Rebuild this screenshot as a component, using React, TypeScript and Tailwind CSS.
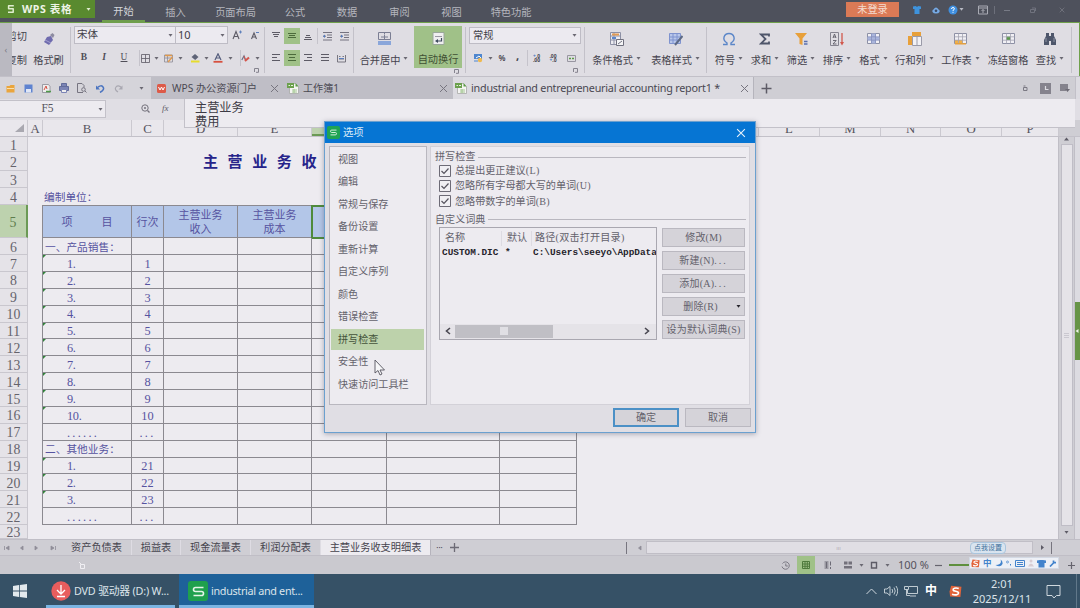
import React from "react";

type Kids = { children?: React.ReactNode };

const UI = "font-['Noto_Sans','Noto_Sans_CJK_SC',sans-serif]";
const SONG = "font-['Liberation_Serif','Noto_Sans_CJK_SC',serif]";

function Cell({ w, c = "", children }: Kids & { w: string; c?: string }) {
  return <div className={`flex h-full shrink-0 items-center justify-center ${w} ${c}`}>{children}</div>;
}

function Svg({ s = 12, h, children }: Kids & { s?: number; h?: number }) {
  return (
    <svg width={s} height={h ?? s} viewBox={`0 0 ${s} ${h ?? s}`} fill="none" className="shrink-0">
      {children}
    </svg>
  );
}

function Caret({ c = "#6a6872" }: { c?: string }) {
  return (
    <Svg s={5} h={3}>
      <path d="M0.5 0h4L2.5 2.8z" fill={c} />
    </Svg>
  );
}

function Lines({ rows, c = "#5d5b66" }: { rows: [number, number, number][]; c?: string }) {
  return (
    <Svg s={10}>
      {rows.map(([x, y, w], i) => (
        <rect key={i} x={x} y={y} width={w} height="1" fill={c} />
      ))}
    </Svg>
  );
}

function Corner() {
  return (
    <Svg s={5}>
      <path d="M.5 4V.5h4v3.8H2" stroke="#85838e" />
    </Svg>
  );
}

function Sep() {
  return <div className="h-[46px] w-px shrink-0 bg-[#c3c1c9]" />;
}

function SheetIcon({ hot }: { hot: number }) {
  return (
    <Svg s={13}>
      <path d="M.5 1.5h12v10H.5z" fill="#f1f0f5" stroke="#8d90a5" />
      {hot === 0 && <path d="M4 1.5h5v10H4zM.5 5h12v3H.5z" fill="#a9b4dc" />}
      {hot === 1 && <path d="M1 8h8v3.5H1z" fill="#f0b04a" />}
      {hot === 2 && <path d="M4 4.5h4.5v3.5H4z" fill="#5c9b4c" />}
      <path d="M4.5 1.5v10M8.5 1.5v10M.5 4.8h12M.5 8.2h12" stroke={hot === 0 ? "#8790bd" : "#a5a5b2"} strokeWidth=".8" />
      {hot === 1 && <path d="M1 11.8h11" stroke="#e8a13a" strokeWidth="1.4" />}
    </Svg>
  );
}

function Big({ w, label, icon, caret = true }: { w: string; label: string; icon: React.ReactNode; caret?: boolean }) {
  return (
    <div className={`flex h-full shrink-0 flex-col items-center pt-2 ${w}`}>
      <div className="flex h-[15px] items-center justify-center">{icon}</div>
      <div className="mt-[7px] flex h-[14px] items-center gap-[3px] text-[10.2px] leading-none text-[#45434d]">
        <span>{label}</span>
        {caret && <span className="pb-[3px]"><Caret /></span>}
      </div>
    </div>
  );
}

function WpsS({ size, c }: { size: number; c: string }) {
  return (
    <svg width={size} height={size} viewBox="0 0 12 12" fill="none">
      <path d="M10 2.8H3.6Q2 2.8 2 4.4T3.6 6h4.8Q10 6 10 7.6T8.4 9.2H2" stroke={c} strokeWidth="1.3" />
    </svg>
  );
}

function Sogou({ size }: { size: number }) {
  return (
    <svg width={size} height={size} viewBox="0 0 12 12" fill="none">
      <path d="M2 .8 11.5 1.5 10.5 11 1 10.5 .5 6z" fill="#e2643a" />
      <path d="M9 3.2C6 2.2 3.500 3 3.800 4.600S9 5.500 8.800 7.400 5.500 9.600 2.800 8.500" stroke="#fff" strokeWidth="1.5" />
    </svg>
  );
}

function DocIcon() {
  return (
    <Svg s={12}>
      <path d="M2.5 1.5h6l3 3v7h-9z" fill="#f4f4f2" stroke="#a7aaa6" strokeWidth=".8" />
      <path d="M8.5 1v3.5h3z" fill="#5a9a45" />
      <rect x="0" y="1" width="7" height="5" fill="#6ba04d" />
      <path d="M1.5 3.5h1.5M4 3.5h2" stroke="#e8f2e0" />
      <path d="M5 8h5M5 10h5M7 7v4" stroke="#9dc48b" strokeWidth=".9" />
    </Svg>
  );
}

function X({ s = 9, c = "#77757f" }: { s?: number; c?: string }) {
  return (
    <svg width={s} height={s} viewBox="0 0 9 9">
      <path d="M1 1l7 7M8 1L1 8" stroke={c} strokeWidth="1" />
    </svg>
  );
}

function TitleBar() {
  const menu: [string, string][] = [
    ["开始", "w-[43px]"], ["插入", "w-[61px]"], ["页面布局", "w-[59px]"], ["公式", "w-[60px]"],
    ["数据", "w-[44px]"], ["审阅", "w-[61px]"], ["视图", "w-[43px]"], ["特色功能", "w-[76px]"],
  ];
  return (
    <div className="flex h-[23px] w-full items-start border-b border-[#6fa04b] bg-[#4e515c] text-[10.2px] leading-none text-[#b5b6be]">
      <div className="flex h-[18px] w-[95px] items-center bg-[#598a2f] pl-[7px]">
        <Svg s={8} h={10}><path d="M6.800 1.800H1.600v3h4.600v3.400H1" stroke="#e0edcf" strokeWidth="1.500" strokeLinejoin="round" /></Svg>
        <span className="ml-[7px] w-[56px] text-[10.6px] font-bold text-[#eef4e6] tracking-[0.600px]">WPS 表格</span>
        <span className="ml-[8px]"><Caret c="#e0edcf" /></span>
      </div>
      <div className="w-[7px]" />
      {menu.map(([t, w], i) => (
        <div key={t} className={`flex h-[22px] shrink-0 items-center justify-center pt-[3px] ${w} ${i === 0 ? "border-b-2 border-[#6f9d4d] text-[#d5d6db]" : ""}`}>
          {t}
        </div>
      ))}
      <div className="flex h-full flex-1 items-start justify-end">
        <div className="mt-[2px] flex h-[15px] w-[53px] items-center justify-center bg-[#db7a56] text-[10.2px] text-[#f4dcd0]">未登录</div>
      </div>
      <div className="flex h-[19px] w-[181px] items-center pl-[13px]">
        <Svg s={10}><path d="M1 1.500 3.500 1Q5 2.400 6.500 1L9 1.500V4H7.500v5h-5V4H1z" fill="#3e93dd" /></Svg>
        <div className="w-[10px]" />
        <Svg s={8}><path d="M1.500 3.500Q4-.5 6.500 3.500Q8 4 7.500 6 6.500 7.500 4 7.500T.5 6Q0 4 1.500 3.500z" fill="#77abe6" /><circle cx="4" cy="4.800" r="1.300" fill="#3c4b66" /></Svg>
        <div className="w-[8px]" />
        <Svg s={10}><circle cx="5" cy="5" r="4.500" fill="#3f8fe0" /><path d="M3.500 4Q3.600 2.500 5 2.500T6.400 3.900Q6.300 4.800 5 5.300v.7M5 6.800v1" stroke="#fff" /></Svg>
        <div className="w-[1px]" />
        <Caret c="#b8bac4" />
        <div className="w-[14px]" />
        <Svg s={10}><path d="M.5 1h9v8h-9zM.5 3h9M5 8V4.500M3.500 6 5 4.500 6.500 6" stroke="#a9abb4" /></Svg>
        <div className="ml-[6px] h-[8px] w-px bg-[#6d707b]" />
        <div className="w-[9px]" />
        <Svg s={6}><path d="M0 3.500h6" stroke="#787b86" /></Svg>
        <div className="w-[20px]" />
        <Svg s={6}><path d="M.5 2.500h4v3h-4zM2 1h3.500v3" stroke="#70737e" /></Svg>
        <div className="w-[23px]" />
        <X s={6} c="#7e818b" />
      </div>
    </div>
  );
}

function FontGroup() {
  const serif = "font-['Liberation_Serif'] text-[9.500px] leading-none text-[#504e58]";
  return (
    <div className="flex w-[190px] shrink-0 flex-col">
      <div className="mt-[3px] flex h-[18px] items-center text-[10.5px] text-[#3f3d47]">
        <div className="flex h-[18px] w-[102px] items-center justify-between border border-[#bebcc5] bg-[#eceaf0] px-[2px]">宋体<Caret /></div>
        <div className="flex h-[18px] w-[52px] items-center justify-between border border-l-0 border-[#bebcc5] bg-[#eceaf0] px-[2px] text-[11px]">10<Caret /></div>
        <Cell w="w-[18px]"><Svg s={10}><path d="M1 9 4 1.500 7 9M2.200 6.500h3.600" stroke="#5d5b66" strokeWidth="1.100" /><path d="M7 2h3M8.500 .5v3" stroke="#4d74b5" strokeWidth=".8" /></Svg></Cell>
        <Cell w="w-[16px]"><Svg s={9}><path d="M1.500 8 4 2 6.500 8M2.500 6h3" stroke="#5d5b66" strokeWidth="1.100" /><path d="M6 1.500h3" stroke="#4d74b5" strokeWidth=".9" /></Svg></Cell>
      </div>
      <div className="mt-[6px] flex h-[16px] items-center">
        <Cell w="w-[20px]"><span className={`${serif} font-bold`}>B</span></Cell>
        <Cell w="w-[20px]"><span className={`${serif} font-bold italic`}>I</span></Cell>
        <Cell w="w-[20px]"><span className={`${serif} underline`}>U</span></Cell>
        <Cell w="w-[6px]" c="border-r border-[#c5c3cb]" />
        <Cell w="w-[10px]"><Svg s={9}><path d="M.5 .5h8v8h-8zM4.500 .5v8M.5 4.500h8" stroke="#5d5b66" strokeWidth=".8" /></Svg></Cell>
        <Cell w="w-[13px]"><Caret /></Cell>
        <Cell w="w-[11px]"><Svg s={9}><path d="M.5 1h8v7h-8zM.5 4h8M3.500 1v7" stroke="#8d8b96" strokeWidth=".8" /><path d="M1 1.500h7M4 8l4.500-5" stroke="#e19a4d" strokeWidth="1.400" /></Svg></Cell>
        <Cell w="w-[13px]"><Caret /></Cell>
        <Cell w="w-[15px]"><Svg s={10}><path d="M1.500 4 5 1l3.500 3-3.300 3z" fill="#5f6478" /><path d="M1 8.500h8.500" stroke="#e6dc2e" strokeWidth="2" /></Svg></Cell>
        <Cell w="w-[9px]"><Caret /></Cell>
        <Cell w="w-[14px]"><Svg s={10}><path d="M2 7 5 .8 8 7M3 5h4" stroke="#555d7c" strokeWidth="1.200" /><path d="M.5 8.800h9" stroke="#d7503f" strokeWidth="1.800" /></Svg></Cell>
        <Cell w="w-[10px]"><Caret /></Cell>
        <Cell w="w-[6px]" c="border-r border-[#c5c3cb]" />
        <Cell w="w-[9px]"><Svg s={9}><path d="M.8 6 3 2l1.500 4" stroke="#6b6f86" strokeWidth="1.200" /><path d="M4 7l4-3.500" stroke="#d4554c" strokeWidth="2" /><path d="M3 2l1.500 4" stroke="#d4554c" /></Svg></Cell>
        <Cell w="w-[14px]"><Caret /></Cell>
      </div>
      <div className="flex justify-end pt-[2px] pr-[5px]"><Corner /></div>
    </div>
  );
}

function AlignGroup() {
  const green = "bg-[#a0c188]";
  return (
    <div className="flex w-[88px] shrink-0 flex-col pl-[3px] pt-[5px]">
      <div className="flex h-[16px] items-center">
        <Cell w="w-[16px]"><Lines rows={[[1, 1, 8], [2, 3, 6], [3, 5, 4]]} /></Cell>
        <Cell w="w-[16px]" c={green}><Lines c="#4c6b3c" rows={[[1, 2, 8], [2, 4, 6], [1, 6, 8]]} /></Cell>
        <Cell w="w-[16px]"><Lines rows={[[3, 4, 4], [2, 6, 6], [1, 8, 8]]} /></Cell>
        <Cell w="w-[2px]" c="border-r border-[#c5c3cb]" />
        <Cell w="w-[18px]"><Svg s={9}><path d="M0 .5h9M4 3h5M4 5.500h5M0 8h9M3 4.200H0" stroke="#696775" strokeWidth=".9" /><path d="M0 4.200 2 2.500v3.500z" fill="#5179bf" /></Svg></Cell>
        <Cell w="w-[16px]"><Svg s={9}><path d="M0 .5h9M4 3h5M4 5.500h5M0 8h9M3 4.200H0" stroke="#696775" strokeWidth=".9" /><path d="M3 4.200 1 2.500v3.500z" fill="#5179bf" /></Svg></Cell>
      </div>
      <div className="mt-[6px] flex h-[16px] items-center">
        <Cell w="w-[16px]"><Lines rows={[[1, 1, 8], [1, 4, 5], [1, 7, 8]]} /></Cell>
        <Cell w="w-[16px]" c={green}><Lines c="#4c6b3c" rows={[[1, 1, 8], [2, 4, 6], [1, 7, 8]]} /></Cell>
        <Cell w="w-[16px]"><Lines rows={[[1, 1, 8], [4, 4, 5], [1, 7, 8]]} /></Cell>
        <Cell w="w-[17px]"><Lines rows={[[1, 1, 8], [1, 4, 8], [1, 7, 8]]} /></Cell>
        <Cell w="w-[16px]"><Svg s={9}><path d="M.5 1v7h8V1M2 2.500h1.500M5.500 2.500H7M2 5h5" stroke="#6d6b76" strokeWidth=".9" /><path d="M2 4.500h5" stroke="#5179bf" strokeWidth=".9" /></Svg></Cell>
      </div>
    </div>
  );
}

function NumberGroup() {
  return (
    <div className="flex w-[118px] shrink-0 flex-col pl-[3px]">
      <div className="mt-[4px] flex h-[17px] w-[112px] items-center justify-between border border-[#bebcc5] bg-[#eceaf0] px-[3px] text-[10.2px] text-[#3f3d47]">常规<Caret /></div>
      <div className="mt-[6px] flex h-[16px] items-center text-[8px] text-[#44424c]">
        <Cell w="w-[17px]"><Svg s={10}><rect x="1" y="1" width="8" height="5" fill="#4e86cf" /><path d="M3 5l3-2 2 2" stroke="#fff" /><path d="M1 8h4" stroke="#4e86cf" /><circle cx="7" cy="7" r="2.200" fill="#efb94f" /></Svg></Cell>
        <Cell w="w-[8px]"><Caret /></Cell>
        <Cell w="w-[16px]" c="font-semibold">%</Cell>
        <Cell w="w-[15px]" c="pb-[3px] text-[11px] font-bold">,</Cell>
        <Cell w="w-[3px]" c="border-r border-[#c5c3cb]" />
        <Cell w="w-[17px]"><div className="text-[5px] font-bold leading-[4px]"><div><span className="text-[#4a76bd]">+</span>.0</div><div>.00</div></div></Cell>
        <Cell w="w-[16px]"><div className="text-[5px] font-bold leading-[4px]"><div>.00</div><div><span className="text-[#4a76bd]">+</span>.0</div></div></Cell>
        <Cell w="w-[21px]"><Svg s={9}><path d="M.5 1.500h8v6h-8z" stroke="#9896a1" /><path d="M2 4.500h2M5 4.500h2" stroke="#5a9a45" strokeWidth="1.500" /></Svg></Cell>
      </div>
      <div className="flex justify-end pt-[2px] pr-[6px]"><Corner /></div>
    </div>
  );
}

function Ribbon() {
  return (
    <div className="flex h-[53px] w-full items-center border-r border-[#6fa04b] bg-[#dfdde3]">
      <div className="flex h-full w-[12px] shrink-0 items-center justify-center bg-[#bab9c1] text-[9px] text-[#7c7a85]">‹</div>
      <div className="flex h-full w-[15px] shrink-0 flex-col items-end overflow-hidden pt-[8px] text-[10.2px] leading-none text-[#45434d]">
        <div className="h-[10px]">剪切</div>
        <div className="mt-[14px] h-[10px]">复制</div>
      </div>
      <Big w="w-[43px]" caret={false} label="格式刷" icon={<Svg s={14}><path d="M8 3l2.500-2 2 2L11 6z" fill="#8d8ba0" /><path d="M5 5l4-1 2 4-4 5-5-3z" fill="#6f6bae" /><path d="M3 8l6 3" stroke="#a3a0d0" /></Svg>} />
      <Sep />
      <div className="w-[3px] shrink-0" />
      <div className="h-full"><FontGroup /></div>
      <Sep />
      <div className="h-full"><AlignGroup /></div>
      <Sep />
      <Big w="w-[60px]" label="合并居中" icon={<Svg s={13}><path d="M.5 .5h12v7H.5zM6.500 .5v2M3 5h7M6.500 3v4" stroke="#7b7e93" /><rect y="9" width="13" height="4" fill="#8aa6da" /></Svg>} />
      <div className="flex h-full shrink-0 flex-col">
        <div className="mt-[3px] flex h-[42px] w-[48px] flex-col items-center bg-[#a0c188] pt-[6px]">
          <Svg s={13}><path d="M1 .5h11v12H1z" fill="#efeff0" stroke="#9aa79a" /><path d="M3 4.500h7" stroke="#9a98a3" /><path d="M9.500 6v3H5" stroke="#3e4a5e" strokeWidth="1.200" /><path d="M3 9l3-2v4z" fill="#3e4a5e" /></Svg>
          <span className="mt-[9px] text-[10.2px] leading-none text-[#3f5034]">自动换行</span>
        </div>
        <div className="flex justify-end pt-px pr-[3px]"><Corner /></div>
      </div>
      <div className="w-[3px] shrink-0" />
      <Sep />
      <div className="h-full"><NumberGroup /></div>
      <Sep />
      <Big w="w-[63px]" label="条件格式" icon={<Svg s={14}><path d="M.5 .5h10v12H.5zM.5 4h10M.5 8h10M4 .5v12" stroke="#8d90a5" fill="#ecebf0" /><path d="M2 2.500h7" stroke="#e39a52" strokeWidth="2" /><path d="M2 6h4" stroke="#5a86cc" strokeWidth="2" /><path d="M6.500 7.500h7v6h-7zM8 12l4-3" stroke="#70707e" fill="#f4f4f6" /></Svg>} />
      <Big w="w-[55px]" label="表格样式" icon={<Svg s={14}><path d="M.5 1.500h11v10H.5z" fill="#b9c7ea" stroke="#7f93cf" /><path d="M4 1v10M8 1v10M.5 5h11M.5 8h11" stroke="#7f93cf" /><path d="M6 13l7.500-9" stroke="#5d6a85" strokeWidth="2" /></Svg>} />
      <div className="w-[3px] shrink-0" />
      <Sep />
      <div className="w-[4px] shrink-0" />
      <Big w="w-[36px]" label="符号" icon={<Svg s={14}><path d="M1 12.500h4v-1.500C-.5 7.500 2 1.500 7 1.500s7.500 6 2 9.500v1.500h4" stroke="#5b86c8" strokeWidth="1.400" /></Svg>} />
      <Big w="w-[36px]" label="求和" icon={<Svg s={12}><path d="M10 3.500V1.500H2L6.500 6 2 10.500h8v-2" stroke="#4f566b" strokeWidth="1.800" /></Svg>} />
      <Big w="w-[36px]" label="筛选" icon={<Svg s={14}><path d="M1 1h12L8.500 6.500V13l-3-1V6.500z" fill="#e8a03a" /><path d="M10 9.500h3.500M10 12h3.500" stroke="#5a6fae" strokeWidth="1.300" /></Svg>} />
      <Big w="w-[36px]" label="排序" icon={<Svg s={14}><path d="M.5 .5h8v13h-8z" stroke="#868490" /><path d="M3 6l1.500-4L6 6M3.300 5h2.500M3 8.500h3.200L3 12h3.500" stroke="#5d5b66" strokeWidth=".9" /><path d="M12 1v10" stroke="#d1584d" strokeWidth="1.300" /><path d="M10 10h4l-2 3.500z" fill="#d1584d" /></Svg>} />
      <Big w="w-[37px]" label="格式" icon={<SheetIcon hot={0} />} />
      <Big w="w-[45px]" label="行和列" icon={<Svg s={14}><path d="M4.500 4.500h9v9h-9z" fill="#f2f1f5" stroke="#9a9aa8" /><path d="M9 5v8" stroke="#9a9aa8" /><rect x="4" y="0" width="9" height="4" fill="#e8a03a" /><rect x="0" y="4" width="4" height="9" fill="#e8a03a" /></Svg>} />
      <Big w="w-[47px]" label="工作表" icon={<SheetIcon hot={1} />} />
      <Big w="w-[48px]" label="冻结窗格" caret={false} icon={<SheetIcon hot={2} />} />
      <Big w="w-[36px]" label="查找" icon={<Svg s={14}><path d="M3 1h3v3h2V1h3v3l2 4v5H8V9H6v4H1V8l2-4z" fill="#4e566b" /><path d="M3 6v4M11 6v4" stroke="#8d93a5" /></Svg>} />
      <div className="w-[3px] shrink-0" />
      <Sep />
    </div>
  );
}

function TabBar() {
  return (
    <div className="flex h-[23px] w-full border-t border-[#c2c0c8] bg-[#cfced4] text-[11px] leading-none text-[#4a4852]">
      <div className="flex w-[151px] shrink-0 items-center bg-[#d5d4da]">
        <Cell w="w-[20px]"><Svg s={9}><path d="M.5 2h3l1-1h4v7.500h-8z" fill="#eaa53c" /><path d="M1 4.500h7" stroke="#fae0ac" /></Svg></Cell>
        <Cell w="w-[17px]"><Svg s={9}><rect x=".5" y=".5" width="8" height="8" fill="#5f83d0" /><rect x="2" y="5" width="5" height="3.500" fill="#dfe6f6" /></Svg></Cell>
        <Cell w="w-[18px]"><Svg s={9}><path d="M.5 .5h6l1.500 2v6H.5z" fill="#eee" stroke="#8a8a93" strokeWidth=".8" /><path d="M2 6l2-4 1 3" stroke="#d65245" /><path d="M4 7.500h5" stroke="#4f9a4a" strokeWidth="1.500" /></Svg></Cell>
        <Cell w="w-[18px]"><Svg s={10}><path d="M2.500 3V.5h5V3M.5 3.500h9v4h-9z" fill="#7b84b5" stroke="#626c9b" /><path d="M2.500 6.500h5v3h-5z" fill="#eee" stroke="#7b84b5" /></Svg></Cell>
        <Cell w="w-[18px]"><Svg s={10}><path d="M6 9.500H.5v-9H5l2 2v2" stroke="#767480" /><circle cx="6.500" cy="6.500" r="1.800" stroke="#767480" /><path d="M8 8l1.500 1.500" stroke="#767480" /></Svg></Cell>
        <Cell w="w-[19px]"><Svg s={9}><path d="M1.500 3.500Q5 .5 7 3T4 8.500" stroke="#4b74c0" strokeWidth="1.500" /><path d="M0 1.500v4h4z" fill="#4b74c0" /></Svg></Cell>
        <Cell w="w-[17px]"><Svg s={9}><path d="M7.500 3.500Q4 .5 2 3T4 8" stroke="#a9a8b1" strokeWidth="1.200" /><path d="M8.500 1.500v4h-4z" fill="#a9a8b1" /></Svg></Cell>
        <Cell w="w-[24px]" c="pl-[4px]"><Caret /></Cell>
      </div>
      <div className="flex w-[134px] shrink-0 items-center bg-[#bfbec6]">
        <Cell w="w-[20px]"><Svg s={9}><rect width="9" height="9" rx="1.500" fill="#dd5a48" /><path d="M1.500 3l1.500 3 1.500-3L6 6l1.500-3" stroke="#fff" /></Svg></Cell>
        <span className="ml-px w-[92px] pt-px text-[10.200px]">WPS 办公资源门户</span>
        <Cell w="w-[21px]"><X /></Cell>
      </div>
      <div className="flex w-[168px] shrink-0 items-center bg-[#bfbec6]">
        <Cell w="w-[15px]"><DocIcon /></Cell>
        <span className="ml-[3px] flex-1 pt-px text-[10.100px]">工作簿1</span>
        <Cell w="w-[20px]"><X /></Cell>
      </div>
      <div className="flex w-[301px] shrink-0 items-center border-r border-[#b5b4bc] bg-[#dcdbe1]">
        <Cell w="w-[16px]"><DocIcon /></Cell>
        <span className="ml-[2px] flex-1 pt-px text-[10.800px] tracking-[-0.240px]">industrial and entrepreneurial accounting report1 *</span>
        <Cell w="w-[17px]"><X /></Cell>
      </div>
      <Cell w="w-[24px]"><Svg s={11}><path d="M5.500 .5v10M.5 5.500h10" stroke="#5d5b66" strokeWidth="1.500" /></Svg></Cell>
      <div className="flex-1" />
      <Cell w="w-[20px]"><Svg s={7}><path d="M1.500 2.500h3.500v3h-3.500zM1.500 1h2" stroke="#7b7983" /></Svg></Cell>
      <Cell w="w-[20px]"><Svg s={11}><rect width="11" height="11" fill="#85838d" /><path d="M5.500 3v3.500h3" stroke="#dcdbe1" strokeWidth="1.200" /></Svg></Cell>
      <Cell w="w-[20px]"><Svg s={10}><path d="M0 1h8v5H6v2H0z" fill="#85838d" /><path d="M5 6h5L7.500 9z" fill="#6d6b75" /></Svg></Cell>
      <div className="w-[5px] shrink-0 border-l border-[#c2c0c8] bg-[#dcdbe1]" />
    </div>
  );
}

function FormulaAndHeader() {
  const cols: [string, string][] = [
    ["A", "w-[15px]"], ["B", "w-[89px]"], ["C", "w-[32px]"], ["D", "w-[74px]"], ["E", "w-[74px]"], ["", "w-[75px]"],
    ["", "w-[113px]"], ["", "w-[77px]"], ["", "w-[61px]"], ["", "w-[61px]"], ["", "w-[60px]"], ["L", "w-[61px]"],
    ["M", "w-[61px]"], ["N", "w-[60px]"], ["O", "w-[61px]"], ["P", "w-[57px]"],
  ];
  return (
    <div className="relative flex h-[38px] w-full flex-col bg-[#e0dee4]">
      <div className={`flex h-[21px] items-start ${SONG}`}>
        <div className="mt-px flex h-[18px] w-[106px] items-center border border-l-0 border-[#c3c1c9] bg-[#edebf0] text-[11.500px] text-[#55535d]">
          <span className="w-[95px] text-center">F5</span>
          <span className="ml-[3px]"><Caret /></span>
        </div>
        <div className="mt-px flex h-[17px] items-center">
          <Cell w="w-[78px]"><Svg s={9}><circle cx="4" cy="4" r="3.200" stroke="#75737d" /><path d="M3 4h2M6.500 6.500 8.500 8.500" stroke="#75737d" strokeWidth="1.300" /></Svg></Cell>
          <span className="-ml-[22px] text-[9px] italic text-[#5d5b66]">fx</span>
        </div>
      </div>
      <div className={`flex h-[17px] items-center overflow-hidden border-b border-[#c3c1c9] bg-[#e9e7ec] text-[12.800px] leading-none text-[#55535d] ${SONG}`}>
        <div className="flex h-full w-[28px] shrink-0 items-center justify-end border-r border-[#cbc9d0] pr-[3px]"><Svg s={9}><path d="M9 0v8H0z" fill="#a9a8b0" /></Svg></div>
        {cols.map(([l, w], i) => (
          <div key={i} className={`flex h-full shrink-0 items-center justify-center border-r border-[#cbc9d0] pt-[3px] ${w} ${i === 5 ? "border-b-2 border-b-[#6b9a55] bg-[#bdd2ae]" : ""}`}>{l}</div>
        ))}
        <div className="h-full flex-1 bg-[#cfced4]" />
      </div>
      <div className={`absolute left-[184px] top-0 h-[29px] w-[891px] overflow-hidden border-b border-l border-[#c3c1c9] bg-[#edebf0] pl-[10px] pt-[3px] text-[12.200px] leading-[13.500px] text-[#3d3b45] ${SONG}`}>
        <div>主营业务</div>
        <div>费用</div>
      </div>
    </div>
  );
}

type RowDef = { n: number; b: string; c: string; kind: "head" | "num" | "dots" };
const ROWS: RowDef[] = [
  { n: 6, b: "一、产品销售：", c: "", kind: "head" },
  ...Array.from({ length: 10 }, (_, i): RowDef => ({ n: 7 + i, b: `${i + 1}.`, c: `${i + 1}`, kind: "num" })),
  { n: 17, b: "......", c: "...", kind: "dots" },
  { n: 18, b: "二、其他业务：", c: "", kind: "head" },
  { n: 19, b: "1.", c: "21", kind: "num" },
  { n: 20, b: "2.", c: "22", kind: "num" },
  { n: 21, b: "3.", c: "23", kind: "num" },
  { n: 22, b: "......", c: "...", kind: "dots" },
];

function RowNo({ n, on }: { n: number; on?: boolean }) {
  return (
    <div className={`flex h-full w-[28px] shrink-0 items-center justify-center border-b border-r border-b-[#c9c7ce] pt-[3px] text-[13.800px] leading-none ${on ? "border-r-2 border-r-[#6b9a55] bg-[#bdd2ae] text-[#5d7d4d]" : "border-r-[#cbc9d0] bg-[#e5e3e8] text-[#65636c]"}`}>
      {n}
    </div>
  );
}

const LINE = "border-[#8b8990]";

function Grid() {
  const head = `flex h-full shrink-0 items-center justify-center border-r border-b pt-px text-center leading-[14.500px] ${LINE}`;
  return (
    <div className={`flex h-[402px] w-full bg-[#edebf0] ${SONG}`}>
      <div className="flex h-full w-[1058px] flex-col overflow-hidden text-[#5653a0]">
        <div className="flex h-[15.400px] shrink-0"><RowNo n={1} /></div>
        <div className="flex h-[19px] shrink-0"><RowNo n={2} /><div className="mt-[1px] flex items-center pl-[175px] text-[15px] font-bold leading-none tracking-[9.600px] text-[#26248a]">主营业务收</div></div>
        <div className="flex h-[16.800px] shrink-0"><RowNo n={3} /></div>
        <div className="flex h-[17px] shrink-0"><RowNo n={4} /><div className="flex items-center pl-[16px] pt-[2px] text-[10.700px] leading-none">编制单位：</div></div>
        <div className="flex h-[33px] shrink-0 text-[11px]">
          <RowNo n={5} on />
          <div className="w-[14px]" />
          <div className={`flex border-l border-t bg-[#b3c6e8] ${LINE}`}>
            <div className={`${head} w-[89px] gap-[29px]`}><span>项</span><span>目</span></div>
            <div className={`${head} w-[32px]`}>行次</div>
            <div className={`${head} w-[74px]`}>主营业务<br />收入</div>
            <div className={`${head} w-[74px]`}>主营业务<br />成本</div>
            <div className={`${head} w-[75px] outline-2 -outline-offset-1 outline-[#4f8a3c]`} />
            <div className={`${head} w-[113px]`} />
            <div className={`${head} w-[77px]`} />
          </div>
        </div>
        {ROWS.map((r) => {
          const cell = `h-full shrink-0 border-r border-b ${LINE}`;
          return (
            <div key={r.n} className="flex h-[16.880px] shrink-0 text-[12.300px] leading-none">
              <RowNo n={r.n} />
              <div className="w-[14px] shrink-0" />
              <div className={`flex h-full w-[90px] shrink-0 items-center border-b border-l border-r ${LINE} ${r.kind === "head" ? "pl-[2px] pt-[2px] text-[10.700px]" : ""}`}>
                {r.kind !== "head" && <div className="h-full w-[24px]">{r.kind === "num" && <Svg s={3}><path d="M0 0h3L0 3z" fill="#2f8038" /></Svg>}</div>}
                <span className={r.kind === "dots" ? "pt-[3px] tracking-[2.300px]" : r.kind === "num" ? "pt-[2px] tracking-[-0.300px]" : ""}>{r.b}</span>
              </div>
              <div className={`${cell} flex w-[32px] items-center justify-center pt-[2px] ${r.kind === "dots" ? "tracking-[2.300px]" : ""}`}>{r.c}</div>
              <div className={`${cell} w-[74px]`} />
              <div className={`${cell} w-[74px]`} />
              <div className={`${cell} w-[75px]`} />
              <div className={`${cell} w-[113px]`} />
              <div className={`${cell} w-[77px]`} />
            </div>
          );
        })}
        <div className="flex h-[13.800px] shrink-0"><RowNo n={23} /></div>
      </div>
      <div className="flex h-full w-[17px] flex-col items-center border-l border-r border-[#c0bec6] bg-[#cfced4]">
        <Svg s={5} h={4}><path d="M0 3.500h5L2.500 .5z" fill="#5d5b66" /></Svg>
        <div className="mt-[3px] flex w-[12px] flex-1 items-center justify-center border border-[#bfbdc6] bg-[#e5e3e8]"><Svg s={5}><path d="M0 .5h5M0 2.500h5M0 4.500h5" stroke="#c3c1c9" strokeWidth=".8" /></Svg></div>
        <div className="flex h-[13px] items-center"><Caret c="#5d5b66" /></div>
      </div>
      <div className="flex w-[5px] flex-col bg-[#dcdbe1] pt-[165px]">
        <div className="flex h-[58px] items-center bg-[#679447]"><Svg s={4}><path d="M3.500 0v4L.5 2z" fill="#eef4e6" /></Svg></div>
      </div>
    </div>
  );
}

function NavArrow({ d }: { d: string }) {
  return <Svg s={6}><path d={d} stroke="#8f8d98" fill="#8f8d98" strokeWidth=".8" /></Svg>;
}

function SheetTabs() {
  const tabs: [string, string][] = [["资产负债表", "w-[70px]"], ["损益表", "w-[49px]"], ["现金流量表", "w-[70px]"], ["利润分配表", "w-[70px]"]];
  return (
    <div className="flex h-[17px] w-full items-center border-b border-t border-[#c0bec6] bg-[#cfced4] text-[10.200px] leading-none text-[#45434d]">
      <Cell w="w-[14px]"><NavArrow d="M.5 1v4M5 1v4L2 3z" /></Cell>
      <Cell w="w-[15px]"><NavArrow d="M4 1v4L1.500 3z" /></Cell>
      <Cell w="w-[14px]"><NavArrow d="M2 1v4L4.500 3z" /></Cell>
      <Cell w="w-[19px]"><NavArrow d="M5.500 1v4M1 1v4L4 3z" /></Cell>
      {tabs.map(([t, w]) => <Cell key={t} w={w} c="border-r border-[#dedce3]">{t}</Cell>)}
      <Cell w="w-[110px]" c="border-r border-[#b5b3bc] bg-[#edebf0]">主营业务收支明细表</Cell>
      <Cell w="w-[17px]" c="text-[8px]">···</Cell>
      <Cell w="w-[12px]"><Svg s={9}><path d="M4.500 0v9M0 4.500h9" stroke="#6d6b76" strokeWidth="1.300" /></Svg></Cell>
      <div className="flex-1" />
      <div className="h-[12px] w-px bg-[#77757f]" />
      <Cell w="w-[19px]" c="pl-[6px]"><NavArrow d="M4 1v4L1.500 3z" /></Cell>
      <div className="flex h-[13px] w-[387px] items-center justify-end border border-[#c0bec6] bg-[#e0dee4]">
        <div className="flex-1 pl-[60px] text-center text-[6px] text-[#b0aeb7]">ııı</div>
        <div className="mr-[26px] flex h-[12px] w-[36px] items-center justify-center rounded-sm border border-[#a9c5dd] bg-[#d9e4ef] text-[7px] text-[#40709a]">点我设置</div>
      </div>
      <Cell w="w-[18px]"><Svg s={5}><path d="M1 0v5l3-2.500z" fill="#5d5b66" /></Svg></Cell>
      <div className="h-[12px] w-px bg-[#77757f]" />
      <div className="w-[28px]" />
    </div>
  );
}

function StatusBar() {
  return (
    <div className="flex h-[18px] w-full items-center bg-[#cac9cf] text-[11px] leading-none text-[#55535d]">
      <Cell w="w-[164px]"><Svg s={7}><path d="M1.500 2.500h4v4h-4zM0 0l3 3" stroke="#f0eff3" /></Svg></Cell>
      <div className="flex-1" />
      <Cell w="w-[24px]"><Svg s={9}><path d="M1.500 2.500A3.700 3.700 0 1 1 1 5.500M4.800 2.500V5h2" stroke="#7b7983" /></Svg></Cell>
      <Cell w="w-[18px]" c="bg-[#a0c188]"><Svg s={8}><path d="M.5 .5h7v7h-7zM3 .5v7M5.300 .5v7M.5 3h7M.5 5.300h7" stroke="#4f7a3c" /></Svg></Cell>
      <Cell w="w-[25px]"><Svg s={8}><path d="M.5 1h4M.5 3h4M.5 5h4M.5 7h4M6.500 .5v4M6.500 6v2M2.500 1v6" stroke="#6d6b76" /></Svg></Cell>
      <Cell w="w-[16px]"><Svg s={8}><path d="M0 .5h3.500v3H0zM4.500 .5H8v3H4.500zM0 5h8v2.500H0z" fill="#73717b" /></Svg></Cell>
      <Cell w="w-[10px]"><Caret /></Cell>
      <Cell w="w-[16px]"><Svg s={8}><path d="M1.500 1.500h5v5.500h-5zM1 1.500h6" stroke="#5d5b66" strokeWidth="1.400" /></Svg></Cell>
      <Cell w="w-[10px]"><Caret /></Cell>
      <span className="-mt-[2px] ml-[6px] w-[32px] text-[11px]">100 %</span>
      <Cell w="w-[16px]"><Svg s={7}><path d="M0 3.500h7" stroke="#66646e" strokeWidth="1.200" /></Svg></Cell>
      <div className="ml-[3px] h-[2px] w-[20px] bg-[#5f8f3e]" />
      <div className="mb-[4px] flex h-[12px] w-[90px] items-center justify-between border border-[#d3d9e4] bg-[#edf0f6] px-px text-[#4283cc]">
        <Sogou size={9} />
        <span className="text-[8.500px] font-bold">中</span>
        <Svg s={8}><path d="M5.500 .5q2 5-5 5.500 5 3 7-1 .5-3-2-4.500z" fill="#4283cc" /></Svg>
        <Svg s={6}><circle cx="1.500" cy="2" r="1" stroke="#4283cc" strokeWidth=".7" /><path d="M4.500 4v1.500" stroke="#4283cc" /></Svg>
        <Svg s={10} h={7}><path d="M.5 .5h9v6h-9zM2 2.500h6M2 4.500h6" stroke="#4283cc" /></Svg>
        <Svg s={6} h={8}><circle cx="3" cy="2" r="1.500" fill="#d8cdd3" /><path d="M0 7.500q3-6 6 0z" fill="#d8cdd3" /></Svg>
        <Svg s={9}><path d="M0 1.500 3 1h3l3 .5V4H7.500v4.500h-6V4H0z" fill="#4283cc" /></Svg>
        <Svg s={8}><path d="M1 7.500 5 3.500M4.500 1.500v2.200h2.500" stroke="#4283cc" strokeWidth="1.700" /></Svg>
      </div>
      <Cell w="w-[21px]" c="pl-[3px]"><Svg s={7}><path d="M3.500 0v7M0 3.500h7" stroke="#66646e" strokeWidth="1.200" /></Svg></Cell>
    </div>
  );
}

function Taskbar() {
  return (
    <div className="flex h-[34px] w-full items-center bg-[#365166] text-[11px] leading-none text-[#dce4ea]">
      <Cell w="w-[46px]" c="pr-[6px]"><Svg s={14}><path d="M0 2l6-.9v5.500H0zM6.800 1 14 0v6.600H6.800zM0 7.400h6V13l-6-.9zM6.800 7.400H14V14l-7.200-1z" fill="#e3e9ed" /></Svg></Cell>
      <div className="flex h-full w-[129px] items-center border-b-[3px] border-[#7ab4e2] pl-[5px] pt-[3px]">
        <Svg s={20}><circle cx="10" cy="10" r="9.700" fill="#e85d5d" /><path d="M10 4v8.500M6 9l4 4 4-4M6 15.500h8" stroke="#fff" strokeWidth="1.300" /></Svg>
        <span className="ml-[3px] text-[10.800px] tracking-[-0.200px]">DVD 驱动器 (D:) W...</span>
      </div>
      <div className="w-[4px]" />
      <div className="flex h-full w-[135px] items-center border-b-[3px] border-[#7ab4e2] bg-[#1e6199] pl-[9px] pt-[3px]">
        <div className="flex size-[20px] items-center justify-center rounded-[3px] bg-[#1fa04d]"><WpsS size={15} c="#e4f4e8" /></div>
        <span className="ml-[3px] text-[10.800px] tracking-[-0.320px]">industrial and ent...</span>
      </div>
      <div className="flex-1" />
      <Cell w="w-[20px]"><Svg s={11} h={7}><path d="M.5 6l5-5 5 5" stroke="#cfd8de" /></Svg></Cell>
      <Cell w="w-[20px]"><Svg s={14} h={12}><path d="M.5 4h2.500l3-2.500v9L3 8H.5zM8 4q1.500 2 0 4M10 2.500q2.500 3.500 0 7M12 1q3.500 5 0 10" stroke="#cfd8de" strokeWidth=".9" /></Svg></Cell>
      <Cell w="w-[20px]"><Svg s={14} h={12}><path d="M5 1.500h8.500v7H3.500V5M6 11h6M.5 1.500h4v3h-4zM2.500 4.500v6H6" stroke="#cfd8de" strokeWidth=".9" /></Svg></Cell>
      <Cell w="w-[20px]" c="text-[12px] font-bold text-white">中</Cell>
      <Cell w="w-[28px]"><Sogou size={13} /></Cell>
      <div className="mr-px flex w-[66px] flex-col items-center gap-[4px] text-[11px]"><span>2:01</span><span>2025/12/11</span></div>
      <Cell w="w-[34px]"><Svg s={15} h={15}><path d="M1 1.500h13v10h-3.500L8 14l-2-2.500H1z" stroke="#cfd8de" /></Svg></Cell>
      <div className="mr-[3px] ml-[6px] h-full w-px bg-[#61788a]" />
    </div>
  );
}

function Btn({ children, c = "" }: Kids & { c?: string }) {
  return <div className={`flex items-center justify-center border border-[#bab8c0] bg-[#d5d3d9] pt-px text-[10px] leading-none ${c}`}>{children}</div>;
}

function Check({ children }: Kids) {
  return (
    <div className="flex h-[15.300px] items-center gap-[4px]">
      <Svg s={12}><path d="M.5 .5h11v11H.5z" fill="#f0eff3" stroke="#6d6b76" /><path d="M2.500 6 5 8.500 9.500 3.500" stroke="#55535d" strokeWidth="1.200" /></Svg>
      <span className="pt-px">{children}</span>
    </div>
  );
}

function Legend({ children }: Kids) {
  return <div className="flex h-[12px] items-center gap-[3px]"><span>{children}</span><div className="h-px flex-1 bg-[#b9b7bf]" /></div>;
}

function OptionsDialog() {
  const items = ["视图", "编辑", "常规与保存", "备份设置", "重新计算", "自定义序列", "颜色", "错误检查", "拼写检查", "安全性", "快速访问工具栏"];
  return (
    <div className={`absolute left-[324px] top-[121px] flex h-[312px] w-[432px] flex-col border border-[#6ba0cf] bg-[#e0dee4] text-[10.100px] leading-none text-[#64626c] shadow-[0_1px_5px_rgba(60,60,80,0.4)] ${SONG}`}>
      <div className="flex h-[21px] shrink-0 items-center bg-[#0675d3] pl-[2px] text-[10.300px] text-[#dcebf8]">
        <div className="flex size-[13px] items-center justify-center rounded-[2px] bg-[#1fa353]"><WpsS size={9} c="#d8f2de" /></div>
        <span className={`ml-[3px] flex-1 ${UI}`}>选项</span>
        <Cell w="w-[28px]"><X s={10} c="#e6f1fa" /></Cell>
      </div>
      <div className="mt-[3px] flex h-[259px] shrink-0 pl-[4px]">
        <div className="flex w-[98px] shrink-0 flex-col border-[1.500px] border-[#b9b7bf] bg-[#edebf0] px-px pt-[1px]">
          {items.map((t) => (
            <div key={t} className="flex h-[22.500px] items-center">
              <div className={`flex h-[21px] w-[93px] items-center pl-[7px] pt-px ${t === "拼写检查" ? "bg-[#bdd2ab] text-[#44523a]" : ""}`}>{t}</div>
            </div>
          ))}
        </div>
        <div className="ml-[3px] flex w-[320px] shrink-0 flex-col border border-[#d3d1d8] bg-[#edebf0] pl-[4px] pr-[3px] pt-[4px]">
          <Legend>拼写检查</Legend>
          <div className="flex flex-col pl-[4px]">
            <Check>总提出更正建议<span className="tracking-[0.400px]">(L)</span></Check>
            <Check>忽略所有字母都大写的单词<span className="tracking-[0.200px]">(U)</span></Check>
            <Check>忽略带数字的单词<span className="tracking-[0.200px]">(B)</span></Check>
          </div>
          <div className="mt-[5px]"><Legend>自定义词典</Legend></div>
          <div className="mt-[2px] flex pl-[4px]">
            <div className="-mt-px flex h-[113px] w-[218px] flex-col overflow-hidden border border-[#a9a7b0] bg-[#edebf0]">
              <div className="flex h-[18px] shrink-0 items-center pt-[3px]">
                <span className="w-[61px] shrink-0 pl-[5px]">名称</span>
                <span className="flex h-full w-[30px] shrink-0 items-center border-l border-[#dddbe2] pl-[5px]">默认</span>
                <span className="flex h-full items-center border-l border-[#dddbe2] pl-[3px] tracking-[0.200px]">路径(双击打开目录)</span>
              </div>
              <div className="flex h-[14px] shrink-0 items-center font-['Liberation_Mono'] text-[9.400px] font-bold text-[#25232b]">
                <span className="w-[65px] shrink-0 pl-[2px]">CUSTOM.DIC</span>
                <span className="w-[28px] shrink-0">*</span>
                <span className="shrink-0">C:\Users\seeyo\AppData</span>
              </div>
              <div className="flex-1" />
              <div className="flex h-[15px] shrink-0 items-center bg-[#e5e3e8]">
                <Cell w="w-[15px]"><Svg s={6} h={8}><path d="M5 1 1.500 4 5 7" stroke="#4a4852" strokeWidth="1.600" /></Svg></Cell>
                <div className="flex h-[13px] w-[98px] items-center justify-center bg-[#c0bfc5]"><div className="size-[8px] bg-[#e0dfe4]" /></div>
                <div className="flex-1" />
                <Cell w="w-[18px]"><Svg s={6} h={8}><path d="M1 1 4.500 4 1 7" stroke="#4a4852" strokeWidth="1.600" /></Svg></Cell>
              </div>
            </div>
            <div className="ml-[5px] flex w-[83px] flex-col gap-[4px] tracking-[0.200px]">
              <Btn c="h-[19px]">修改(M)</Btn>
              <Btn c="h-[19px]">新建(N)<span className="tracking-[2px]">...</span></Btn>
              <Btn c="h-[19px]">添加(A)<span className="tracking-[2px]">...</span></Btn>
              <Btn c="h-[19px]"><span className="flex-1 pl-[2px] text-center">删除(R)</span><span className="w-[8px]"><Caret c="#25232b" /></span></Btn>
              <Btn c="h-[19px]">设为默认词典(S)</Btn>
            </div>
          </div>
        </div>
      </div>
      <div className="flex justify-end gap-[6px] pr-[4px] pt-[3px]">
        <div className="flex h-[19px] w-[66px] items-center justify-center border-2 border-[#4c90c6] bg-[#d5d3d9] pt-px">确定</div>
        <Btn c="h-[19px] w-[66px]">取消</Btn>
      </div>
      <svg className="absolute left-[49px] top-[237px]" width="12" height="17" viewBox="0 0 12 17">
        <path d="M1 1v13l3-2.500 2 4.500 2-1-2-4h4.500z" fill="#f6f6f8" stroke="#55535d" strokeWidth=".9" />
      </svg>
    </div>
  );
}

export default function App() {
  return (
    <div className={`relative flex h-[608px] w-[1080px] flex-col overflow-hidden whitespace-nowrap bg-[#edebf0] ${UI}`}>
      <TitleBar />
      <Ribbon />
      <TabBar />
      <FormulaAndHeader />
      <Grid />
      <SheetTabs />
      <StatusBar />
      <Taskbar />
      <OptionsDialog />
    </div>
  );
}
